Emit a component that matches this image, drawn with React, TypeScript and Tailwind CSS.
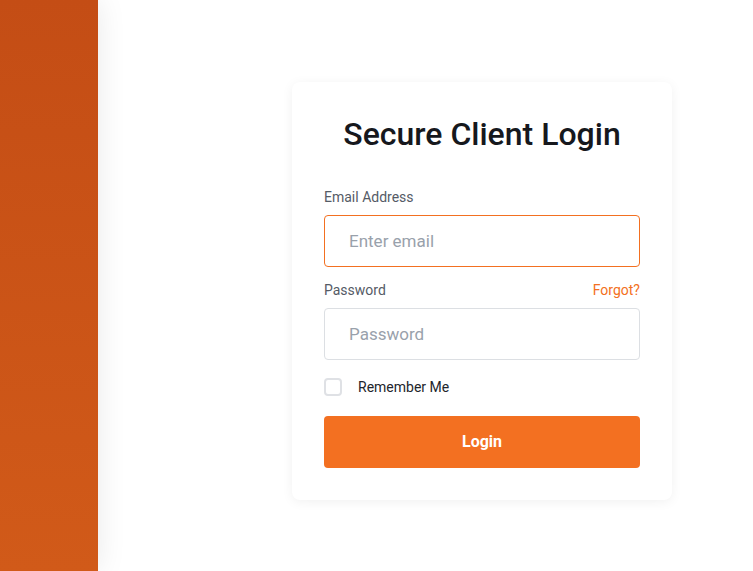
import React from "react";

export default function App() {
  const [remember, setRemember] = React.useState(false);

  return (
    <div className="flex h-screen w-full overflow-hidden bg-white font-['Roboto',sans-serif]">
      {/* side panel */}
      <aside className="relative z-10 h-full w-[98px] shrink-0 bg-gradient-to-b from-[#c44d15] to-[#d15a19] shadow-[0_0_28px_rgba(0,0,0,0.09)]" />

      {/* login area */}
      <main className="flex-1 pl-[194px] pt-[82px]">
        <div className="w-[380px] rounded-lg bg-white px-8 pt-[30px] pb-8 shadow-[0_2px_12px_rgba(0,0,0,0.06)]">
          <h1 className="text-center text-[32px] leading-[44px] font-medium text-[#16181d]">
            Secure Client Login
          </h1>

          <form className="mt-[31px]" onSubmit={(e) => e.preventDefault()}>
            <label className="block text-sm leading-5 text-[#555b66]">
              Email Address
            </label>
            <input
              type="email"
              placeholder="Enter email"
              className="mt-2 h-[52px] w-full rounded border border-[#f37021] px-6 text-[17px] text-[#222] outline-none placeholder:text-[#99a1ab]"
            />

            <div className="mt-[13px] flex items-center justify-between text-sm leading-5">
              <label className="text-[#555b66]">Password</label>
              <a href="#" className="text-[#f37021]">
                Forgot?
              </a>
            </div>
            <input
              type="password"
              placeholder="Password"
              className="mt-2 h-[52px] w-full rounded border border-[#dcdfe3] px-6 text-[17px] text-[#222] outline-none placeholder:text-[#99a1ab]"
            />

            <label className="mt-[17px] flex cursor-pointer items-center gap-4 text-sm leading-5 text-[#22252b]">
              <span
                onClick={() => setRemember(!remember)}
                className={
                  remember
                    ? "h-[18px] w-[18px] rounded border-2 border-[#f37021] bg-[#f37021]"
                    : "h-[18px] w-[18px] rounded border-2 border-[#dfe1e5] bg-white"
                }
              />
              Remember Me
            </label>

            <button
              type="submit"
              className="mt-[19px] h-[52px] w-full rounded bg-[#f37021] text-base font-bold text-white"
            >
              Login
            </button>
          </form>
        </div>
      </main>
    </div>
  );
}
